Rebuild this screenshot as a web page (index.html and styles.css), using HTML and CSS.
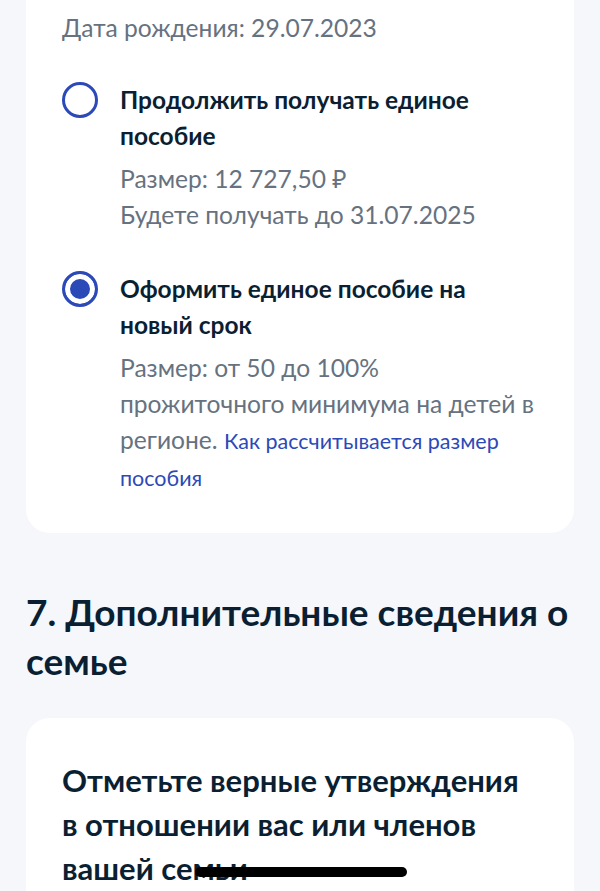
FILE: index.html
```html
<!DOCTYPE html>
<html lang="ru">
<head>
<meta charset="utf-8">
<title>Единое пособие</title>
<link rel="stylesheet" href="styles.css">
</head>
<body>
<main class="page">
  <section class="card card-top">
    <p class="meta">Дата рождения: 29.07.2023</p>
    <div class="options">
      <div class="option">
        <span class="radio"></span>
        <div class="option-body">
          <div class="option-title">Продолжить получать единое пособие</div>
          <div class="option-details">
            <div>Размер: 12 727,50 ₽</div>
            <div>Будете получать до 31.07.2025</div>
          </div>
        </div>
      </div>
      <div class="option">
        <span class="radio radio-checked"></span>
        <div class="option-body">
          <div class="option-title">Оформить единое пособие на новый срок</div>
          <div class="option-details">
            <div>Размер: от 50 до 100% прожиточного минимума на детей в регионе. <a class="link" href="#">Как рассчитывается размер пособия</a></div>
          </div>
        </div>
      </div>
    </div>
  </section>

  <h2 class="section-title">7. Дополнительные сведения о семье</h2>

  <section class="card card-bottom">
    <h3 class="card-title">Отметьте верные утверждения в&nbsp;отношении вас или членов вашей семьи</h3>
  </section>
</main>
<div class="home-indicator"></div>
</body>
</html>
```

FILE: styles.css
```css
html, body {
  margin: 0;
  padding: 0;
}

body {
  background: #f5f7fb;
  font-family: Lato, "Noto Sans", sans-serif;
  color: #0b1f33;
  height: 891px;
  overflow: hidden;
}

.page {
  padding: 0 26px;
}

.card {
  background: #ffffff;
  border-radius: 24px;
}

.card-top {
  border-top-left-radius: 0;
  border-top-right-radius: 0;
  padding: 10px 36px 37px 36px;
}

.meta {
  margin: 0;
  font-size: 24.6px;
  line-height: 36px;
  color: #66727f;
}

.options {
  margin-top: 36px;
  display: flex;
  flex-direction: column;
  gap: 38px;
}

.option {
  display: flex;
  gap: 22px;
  align-items: flex-start;
}

.radio {
  flex: 0 0 auto;
  width: 36px;
  height: 36px;
  box-sizing: border-box;
  border: 3px solid #2c49b8;
  border-radius: 50%;
  background: #ffffff;
}

.radio-checked {
  background: #2c49b8;
  box-shadow: inset 0 0 0 5px #ffffff;
}

.option-body {
  flex: 1 1 auto;
  max-width: 418px;
}

.option-title {
  font-size: 24.5px;
  line-height: 36px;
  font-weight: 700;
  color: #0b1f33;
}

.option-details {
  margin-top: 7px;
  font-size: 24.6px;
  line-height: 36px;
  color: #66727f;
}

.link {
  color: #2c49b8;
  text-decoration: none;
  font-size: 21.5px;
}

.section-title {
  margin: 54px -16px 33px 0;
  font-size: 37px;
  line-height: 49px;
  font-weight: 700;
  color: #0b1f33;
}

.card-bottom {
  padding: 40px 36px 60px 36px;
  min-height: 200px;
}

.card-title {
  margin: 0;
  font-size: 31px;
  line-height: 44px;
  font-weight: 700;
  color: #0b1f33;
  max-width: 470px;
}

.home-indicator {
  position: absolute;
  left: 195px;
  top: 867px;
  width: 212px;
  height: 10px;
  border-radius: 5px;
  background: #000000;
}
```
